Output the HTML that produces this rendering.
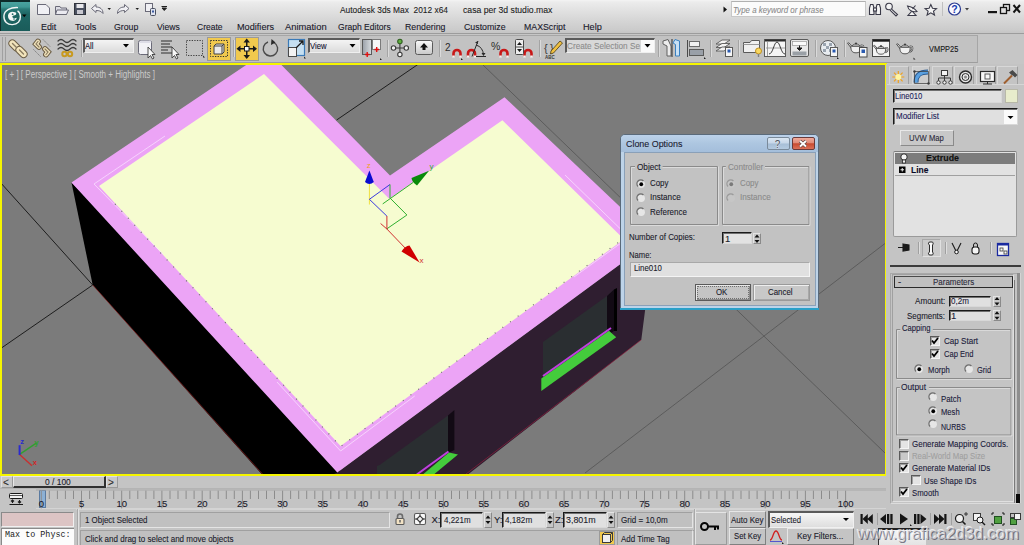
<!DOCTYPE html>
<html><head><meta charset="utf-8">
<style>
*{box-sizing:border-box;margin:0;padding:0}
html,body{width:1024px;height:545px;overflow:hidden;background:#c4c4c4;font-family:"Liberation Sans",sans-serif;color:#1a1a2a;position:relative}
.a{position:absolute}
.t{position:absolute;white-space:nowrap;line-height:1;transform-origin:0 0;font-family:"Liberation Sans",sans-serif;-webkit-text-stroke:0.1px currentColor}
svg{position:absolute;overflow:visible}
</style></head><body>
<!-- title + menu -->
<div class=a style="left:0;top:0;width:1024px;height:34px;background:linear-gradient(#f4f4f4 0,#ececec 2px,#e2e2e2 10px,#d6d6d6 20px,#cbcbcb 30px,#c6c6c6 32px);border-bottom:1.5px solid #9c9c9c"></div>
<!-- toolbar strip -->
<div class=a style="left:0;top:34px;width:1024px;height:30px;background:#c6c6c6"></div>
<div class=a style="left:0;top:35px;width:978px;height:28px;background:#c2c2c2;border-top:1px solid #a6a6a6;border-right:1px solid #a6a6a6;border-bottom:1px solid #9e9e9e"></div>
<!-- viewport -->
<div class=a style="left:0;top:63px;width:887px;height:413px;background:#7b7b7b;border:2px solid #f5f500"></div>
<svg style="left:0;top:0" width="1024" height="545" viewBox="0 0 1024 545">
 <defs><clipPath id="vc"><rect x="2" y="65" width="883" height="409"/></clipPath></defs>
 <g clip-path="url(#vc)">
  <g stroke="#1e1e1e" stroke-width="1" fill="none">
   <line x1="0" y1="182" x2="92.7" y2="285"/>
   <line x1="92.7" y1="285" x2="0" y2="349"/>
   <line x1="336.6" y1="120" x2="420" y2="63"/>
  </g>
  <g stroke="#5c5c5c" stroke-width="1" fill="none">
   <line x1="483" y1="65" x2="885" y2="453"/>
   <line x1="585" y1="473" x2="900" y2="232"/>
  </g>
  <polygon points="71.5,182.5 92.7,285 262.5,475 340,475 340,460" fill="#000"/>
  <line x1="92.7" y1="285" x2="262.5" y2="474" stroke="#a02020" stroke-width="0.6"/>
  <polygon points="330,476 466,476 641.3,339.8 654.2,239.2 337.3,472.4" fill="#2f1e30"/>
  <line x1="466" y1="474" x2="641.3" y2="339.8" stroke="#a02040" stroke-width="0.6"/>
  <!-- window 1 -->
  <polygon points="543,342 607,296 614,289.5 614,331 543,378" fill="#2a2e31"/>
  <polygon points="607,296 614,289.5 614,331 607,336" fill="#120a14"/>
  <polygon points="614,289.5 617,288 617,331 614,331" fill="#000"/>
  <polygon points="541.3,391 541.3,378.6 609,330.7 616.2,337.3" fill="#44cc3c"/>
  <line x1="543" y1="376" x2="611" y2="328" stroke="#c040e0" stroke-width="2"/>
  <!-- window 2 -->
  <polygon points="377,476 377,466 380,464.8 448,415.4 448,451 416,476" fill="#2a2e31"/>
  <polygon points="448,415.4 454.4,410 454.4,450 448,453" fill="#120a14"/>
  <polygon points="421,476 449,452.5 458,454.5 432,476" fill="#44cc3c"/>
  <line x1="416.8" y1="474.5" x2="448.5" y2="451.5" stroke="#c040e0" stroke-width="2"/>
  <!-- roof -->
  <polygon points="71.5,182.5 267.4,50.7 390,175.5 504.5,97.2 654.2,239.2 337.3,472.4" fill="#eca4f6"/>
  <polygon points="99,186 264,74 389.2,198.8 502.4,120.3 624,239.3 340.6,446" fill="#f6fcd0"/>
  <g stroke="#fbe6ff" stroke-width="0.7" fill="none">
   <polyline points="94,184 165,136"/>
   <polyline points="94,184 163,254"/>
   <polyline points="277,382 340.6,451 414.7,396"/>
   <polyline points="565,175 621,229.5"/>
   <polyline points="574,277 621,243"/>
  </g>
  <g stroke="#707070" stroke-width="1.2" stroke-dasharray="1 8.5" fill="none">
   <polyline points="115,204 340.6,446.5 623,239"/>
  </g>
  <!-- gizmo -->
  <g fill="none" stroke-width="1">
   <line x1="369.4" y1="184" x2="369.4" y2="204.5" stroke="#f0e040"/>
   <polyline points="369.4,199.3 390,184.5" stroke="#3a3ae0"/>
   <line x1="390" y1="184.5" x2="390" y2="198.2" stroke="#30b030"/>
   <line x1="369.4" y1="199.3" x2="386.9" y2="216.1" stroke="#3a3ae0"/>
   <polyline points="390,198 406.9,215 386.9,228.8" stroke="#30b030"/>
   <line x1="382.7" y1="203.9" x2="413.2" y2="182.4" stroke="#30b030"/>
   <polyline points="386.9,216 386.9,229 380.6,223.5" stroke="#d03030"/>
   <line x1="386.9" y1="229" x2="405.9" y2="248.8" stroke="#d03030"/>
  </g>
  <path d="M369.4,170.5 L373.8,182 Q369.4,186 365,182 Z" fill="#0a0ad0"/>
  <path d="M429,170.8 L417,185.5 Q412,182 411.5,178 Z" fill="#0a8a0a"/>
  <path d="M419.6,262.5 L401.5,251.5 Q405,246 409.5,245.5 Z" fill="#d00000"/>
  <g font-family="Liberation Sans" font-size="8">
   <text x="366.8" y="168" fill="#f0a020">z</text>
   <text x="429.5" y="168.5" fill="#30b030">y</text>
   <text x="419.5" y="263" fill="#d03030">x</text>
  </g>
  <!-- tripod -->
  <g fill="none" stroke-width="1.4">
   <line x1="19.6" y1="454.4" x2="36.6" y2="442.9" stroke="#30a030"/>
   <line x1="19.6" y1="454.4" x2="32" y2="465.8" stroke="#c83030"/>
   <line x1="19.6" y1="455" x2="19.6" y2="445.2" stroke="#2a2ad0" stroke-width="2"/>
  </g>
  <g font-family="Liberation Sans" font-size="7.5" font-weight="bold">
   <text x="20.2" y="444.3" fill="#2a2ad0">z</text>
   <text x="34.6" y="444.5" fill="#30a030">y</text>
   <text x="32.8" y="464.8" fill="#d02828">x</text>
  </g>
 </g>
</svg>
<div class=a style='left:0px;top:0px;width:30px;height:31px;background:#0d2a2a'></div><div class=a style='left:1px;top:1.5px;width:28.5px;height:29.0px;background:linear-gradient(#4aa3a0 0,#3e9794 5px,#2a7a78 7px,#1e6664 12px,#1a5c5a 100%)'></div><svg style='left:0;top:0' width='30' height='31'>
<path d='M18 7.6 C11 7.2 4.2 9.8 3.9 16 C3.7 21.8 7.5 24.8 12.5 24.6 C17.8 24.4 20.6 21 20.4 16.3 C20.3 13.8 19.2 11.8 17.5 10.8' stroke='#f0f4f4' stroke-width='1.4' fill='none'/>
<path d='M8 15.5 C8.5 12 12 11 15 12.3 C17 13.2 16.5 14.8 14.8 15.3 C13 15.8 11.8 16.2 12.5 17.3 C13.5 18.6 16 18.3 16.8 17.8 C16.5 20.2 14 21.2 11.8 20.8 C9.3 20.3 7.8 18.3 8 15.5 Z' fill='#f4f6f6'/>
<circle cx='12.6' cy='14.2' r='0.9' fill='#1d6866'/><circle cx='14' cy='19' r='0.8' fill='#1d6866'/>
<path d='M22 14.5 H26.5 L24.25 17.2 Z' fill='#050505'/>
</svg><svg style='left:0;top:0' width='200' height='18'>
<g stroke='#6a6a78' stroke-width='1' fill='#f0f0f4'>
 <path d='M37.5 4.5 H46 L49.5 8 V14.5 H37.5 Z'/>
 <path d='M55.5 6.5 H60 L61 8 H66.5 V14.5 H55.5 Z' fill='#dcdce4'/>
 <path d='M57 10 H68.5 L66.5 14.5 H55.5 Z' fill='#eaeaf0'/>
</g>
<rect x='74.5' y='3.5' width='11' height='11' fill='#4a5060' stroke='#30343c'/>
<rect x='76.5' y='4' width='7' height='4' fill='#e8e8ec'/>
<rect x='77' y='10' width='6' height='4' fill='#c8c8d0'/>
<path d='M91.5 8.5 L96 4.5 V7 C100 7 103 9 103 13.5 C101 11 99 10.5 96 10.5 V12.5 Z' fill='#f0f0f4' stroke='#6a6a78'/>
<path d='M107.5 8 H111 L109.25 10 Z' fill='#202020'/>
<path d='M129 8.5 L124.5 4.5 V7 C120.5 7 117.5 9 117.5 13.5 C119.5 11 121.5 10.5 124.5 10.5 V12.5 Z' fill='#f0f0f4' stroke='#6a6a78'/>
<path d='M135.5 8 H139 L137.25 10 Z' fill='#202020'/>
<rect x='145.5' y='3.5' width='7' height='8' fill='#f0f0f4' stroke='#6a6a78'/>
<rect x='150.5' y='8.5' width='5' height='7' rx='1' fill='#e0e4f0' stroke='#4a5060'/>
<rect x='152' y='10.5' width='2' height='2' fill='#3a5aa0'/>
<path d='M161.5 6.5 H167 M162 8 H166.5 L164.25 10.5 Z' stroke='#202020' fill='#202020'/>
</svg><svg style='left:700px;top:0' width='324' height='18'>
<path d='M23.5 6.5 L27 9.5 L23.5 12.5 Z' fill='#101010'/>
</svg><div class=a style='left:731px;top:1px;width:135px;height:16px;background:#fbfbfb;border:1px solid #c8c8c8;border-top-color:#b0b0b0'></div><svg style='left:860px;top:0' width='164' height='18'>
<g fill='#f4f4f4' stroke='#3a3a48' stroke-width='1.1'>
 <path d='M9.5 14.5 V8 L10.5 4.5 H13 L14 8 V14.5 Z'/><path d='M16 14.5 V8 L17 4.5 H19.5 L20.5 8 V14.5 Z'/>
 <rect x='13.5' y='8' width='3' height='3'/>
</g>
<g fill='none' stroke='#3a3a48' stroke-width='1.1'>
 <circle cx='29' cy='6.5' r='3.3' fill='#f4f4f4'/><path d='M31.3 8.8 L37.5 14.5 L36 16 L30 10.2' fill='#f4f4f4'/>
 <path d='M48 15.5 H56 L52 11 Z' fill='#f4f4f4'/><path d='M47.5 6 C48.5 10.5 52.5 12.5 57 11.5 C55 9 51 6.5 47.5 6 Z' fill='#f4f4f4'/><path d='M52.5 9 L55.5 5.5'/>
 <path d='M70.8 4.5 L72.5 8.3 L76.5 8.6 L73.5 11.2 L74.5 15 L70.8 12.8 L67.1 15 L68.1 11.2 L65.1 8.6 L69.1 8.3 Z' fill='#f4f4f4'/>
</g>
<rect x='82' y='2' width='1' height='14' fill='#c0c0c0'/>
<circle cx='94.5' cy='9' r='6' fill='#fafaff' stroke='#2a3a90' stroke-width='1.2'/>
<text x='91.3' y='13' font-family='Liberation Sans' font-weight='bold' font-size='10.5' fill='#1a3ab0'>?</text>
<path d='M105 8 H109 L107 10.5 Z' fill='#404040'/>
<rect x='128' y='11' width='9' height='2.2' fill='#151515'/>
<rect x='143.5' y='4.5' width='6' height='6' fill='none' stroke='#151515' stroke-width='1.3'/>
<rect x='140.5' y='7.5' width='6' height='6' fill='#e0e0e0' stroke='#151515' stroke-width='1.3'/>
<path d='M153.5 5 L160 12.5 M160 5 L153.5 12.5' stroke='#151515' stroke-width='2'/>
</svg><div class=a style='left:2px;top:37px;width:1px;height:24px;background:#a0a0a0'></div><div class=a style='left:4.5px;top:37px;width:1.0px;height:24px;background:#a0a0a0'></div><div class=a style='left:80.5px;top:40px;width:1.0px;height:17px;background:#a4a4a4'></div><div class=a style='left:81.5px;top:40px;width:1.0px;height:17px;background:#dadada'></div><div class=a style='left:233px;top:40px;width:1px;height:17px;background:#a4a4a4'></div><div class=a style='left:234px;top:40px;width:1px;height:17px;background:#dadada'></div><div class=a style='left:386.5px;top:40px;width:1.0px;height:17px;background:#a4a4a4'></div><div class=a style='left:387.5px;top:40px;width:1.0px;height:17px;background:#dadada'></div><div class=a style='left:438.5px;top:40px;width:1.0px;height:17px;background:#a4a4a4'></div><div class=a style='left:439.5px;top:40px;width:1.0px;height:17px;background:#dadada'></div><div class=a style='left:539px;top:40px;width:1px;height:17px;background:#a4a4a4'></div><div class=a style='left:540px;top:40px;width:1px;height:17px;background:#dadada'></div><div class=a style='left:657.5px;top:40px;width:1.0px;height:17px;background:#a4a4a4'></div><div class=a style='left:658.5px;top:40px;width:1.0px;height:17px;background:#dadada'></div><div class=a style='left:709.5px;top:40px;width:1.0px;height:17px;background:#a4a4a4'></div><div class=a style='left:710.5px;top:40px;width:1.0px;height:17px;background:#dadada'></div><div class=a style='left:738px;top:40px;width:1px;height:17px;background:#a4a4a4'></div><div class=a style='left:739px;top:40px;width:1px;height:17px;background:#dadada'></div><div class=a style='left:815px;top:40px;width:1px;height:17px;background:#a4a4a4'></div><div class=a style='left:816px;top:40px;width:1px;height:17px;background:#dadada'></div><div class=a style='left:843.5px;top:40px;width:1.0px;height:17px;background:#a4a4a4'></div><div class=a style='left:844.5px;top:40px;width:1.0px;height:17px;background:#dadada'></div><div class=a style='left:82.5px;top:37.5px;width:51.5px;height:15.5px;background:linear-gradient(#f4f4f4,#dcdcdc);border-top:2px solid #5a5a5a;border-left:2px solid #5a5a5a;border-bottom:1px solid #efefef;border-right:1px solid #efefef'></div><div class=a style='left:307.5px;top:37.5px;width:52.5px;height:15.5px;background:linear-gradient(#f4f4f4,#dcdcdc);border-top:2px solid #5a5a5a;border-left:2px solid #5a5a5a;border-bottom:1px solid #efefef;border-right:1px solid #efefef'></div><div class=a style='left:565px;top:37.5px;width:90px;height:15.5px;background:#d8d8d8;border-top:2px solid #5a5a5a;border-left:2px solid #5a5a5a;border-bottom:1px solid #efefef;border-right:1px solid #efefef'></div><div class=a style='left:641px;top:39.5px;width:13px;height:12.5px;background:#fafafa'></div><div class=a style='left:207px;top:37px;width:23.5px;height:23.5px;background:#f1c94e;border:1px solid #9a9a9a'></div><div class=a style='left:235px;top:37px;width:23.5px;height:23.5px;background:#f1c94e;border:1px solid #9a9a9a'></div><svg style='left:0;top:0' width='1000' height='64'>
<g fill='none' stroke-linecap='round'>
 <!-- link -->
 <g stroke='#6a5c44' stroke-width='1' fill='#f2e4bc'>
  <rect x='8' y='42' width='13' height='7' rx='3.5' transform='rotate(45 14.5 45.5)'/>
  <rect x='15' y='48.5' width='13' height='7' rx='3.5' transform='rotate(45 21.5 52)'/>
 </g>
 <g stroke='#8a7c60' stroke-width='1.4' fill='none'><path d='M12.5 43.5 L16.5 47.5 M19.5 50 L23.5 54'/></g>
 <!-- unlink -->
 <g stroke='#6a5c44' stroke-width='5.8'><path d='M39 47 L36 44 L38 41.5'/><path d='M45 49 L48 52 L46 54.5'/></g>
 <g stroke='#f2e4bc' stroke-width='3.8'><path d='M39 47 L36 44 L38 41.5'/><path d='M45 49 L48 52 L46 54.5'/></g>
 <g stroke='#8a7c60' stroke-width='1.2'><path d='M39 47 L36 44 L38 41.5'/><path d='M45 49 L48 52 L46 54.5'/></g>
 <g stroke='#8a8a8a' stroke-width='1' stroke-dasharray='1 1.2'><path d='M43 39.5 L50.5 47 M33.5 49.5 L41 57'/></g>
 <!-- bind -->
 <g stroke='#3a3a3a' stroke-width='1.2'><path d='M58 41 Q61 38 64 41 T70 41 T76 41 M58 45 Q61 42 64 45 T70 45 T76 45 M58 49 Q61 46 64 49 T70 49 T76 49'/></g>
 <g stroke='#c89a20' stroke-width='2'><circle cx='64.5' cy='54' r='2.2'/><circle cx='70' cy='54' r='2.2'/></g>
</g>
<path d='M123 44 H129 L126 47.5 Z' fill='#000'/>
<path d='M349.5 44 H355.5 L352.5 47.5 Z' fill='#000'/>
<path d='M644.5 44 H650.5 L647.5 47.5 Z' fill='#000'/>
<!-- select object -->
<rect x='138.5' y='40.5' width='13' height='14' rx='2' fill='#f2f2f6' stroke='#6a6a78'/>
<path d='M139 43 L141 40.5 H151.5 L150 43 Z' fill='#dcdce6'/>
<path d='M148 47 V58 L150.5 55.5 L152.5 59 L154 58 L152 54.5 L155 54.5 Z' fill='#f8f8f8' stroke='#3a3a3a' stroke-width='0.9'/>
<!-- select by name -->
<g stroke='#606060' stroke-width='1.3'><path d='M161 41 H172 M161 44 H170 M161 47 H172 M161 50 H168 M161 53 H172'/></g>
<path d='M172 47 V58 L174.5 55.5 L176.5 59 L178 58 L176 54.5 L179 54.5 Z' fill='#f8f8f8' stroke='#3a3a3a' stroke-width='0.9'/>
<!-- rect selection -->
<rect x='186.5' y='40.5' width='16' height='15' fill='none' stroke='#404040' stroke-dasharray='1.3 1.3'/>
<path d='M203 55.5 L205 57.5 L203 57.5 Z' fill='#202020'/>
<!-- window crossing -->
<rect x='210.5' y='40.5' width='17' height='16' fill='none' stroke='#303030' stroke-dasharray='1.3 1.3'/>
<path d='M214 46 L216 44 H224 V52 L222 54 H214 Z' fill='#eaeaea' stroke='#404040'/>
<path d='M214 46 H222 V54 M222 46 L224 44' stroke='#404040' fill='none'/>
<!-- move -->
<g fill='#1a1a1a'>
 <path d='M246.7 38.5 L243.5 42.5 H250 Z M246.7 59 L243.5 55 H250 Z M236.5 48.7 L240.5 45.5 V52 Z M257 48.7 L253 45.5 V52 Z'/>
 <rect x='246' y='42' width='1.5' height='13.5'/><rect x='240' y='48' width='13.5' height='1.5'/>
</g>
<rect x='244.5' y='46.5' width='4.5' height='4.5' fill='#fafafa' stroke='#1a1a1a'/>
<!-- rotate -->
<path d='M274 42.5 A7.2 7.2 0 1 1 268 42' fill='none' stroke='#4a4a4a' stroke-width='1.4'/>
<path d='M271.5 39 L275.5 42.5 L271 45 Z' fill='#2a2a2a'/>
<!-- scale -->
<rect x='288.5' y='39.5' width='16' height='16' fill='#c6e0f2' stroke='#3a7ab8' stroke-width='1.2'/>
<rect x='288.5' y='47.5' width='8' height='9' fill='#f2f2f2' stroke='#4a4a4a'/>
<path d='M296 48 L303 41 M299 41 H303 V45' stroke='#1a1a1a' stroke-width='1.3' fill='none'/>
<path d='M304 56.5 L306 58.5 L304 58.5 Z' fill='#202020'/>
<!-- pivot -->
<rect x='362.5' y='39.5' width='9' height='15' fill='url(#gpiv)' stroke='#5a5a5a'/>
<defs><linearGradient id='gpiv' x1='0' x2='1'><stop offset='0' stop-color='#9aa0a8'/><stop offset='1' stop-color='#d8dce0'/></linearGradient></defs>
<rect x='372.5' y='39.5' width='8' height='10' fill='#f6f6f6' stroke='#7a7a7a'/>
<path d='M365 54.5 H369.5 M367.2 52 V57 M374.5 49.5 H379 M376.7 47 V52' stroke='#e01010' stroke-width='1.4'/>
<path d='M380 58 L382 60 L380 60 Z' fill='#202020'/>
<!-- manipulate -->
<g stroke='#3a3a3a' stroke-width='1.1' fill='#f4f4f4'>
 <path d='M399.9 44 V52 M395 48 H405' fill='none'/>
 <circle cx='393.5' cy='48' r='2.2'/><circle cx='406.3' cy='48' r='2.2'/><circle cx='399.9' cy='54.5' r='2.2'/>
 <circle cx='399.9' cy='41.5' r='2.2' fill='#60b040' stroke='#306020'/>
</g>
<!-- keyboard -->
<rect x='415.5' y='40.5' width='17' height='14' rx='2' fill='url(#gkey)' stroke='#5a5a5a'/>
<defs><linearGradient id='gkey' x1='0' y1='0' x2='0' y2='1'><stop offset='0' stop-color='#fafafa'/><stop offset='1' stop-color='#c8c8c8'/></linearGradient></defs>
<path d='M424 43 L420 47.5 H422.5 V50 H425.5 V47.5 H428 Z' fill='#101010'/>
<!-- snaps -->
<text x='445' y='50.5' font-family='Liberation Sans' font-size='10' fill='#2a2a2a'>2</text>
<g fill='none' stroke-width='2.6'>
 <path d='M453.5 57 V53.5 A3.5 3.5 0 0 1 460.5 53.5 V57' stroke='#c81818'/>
 <path d='M468 57 V53.5 A3.5 3.5 0 0 1 475 53.5 V57' stroke='#c81818'/>
 <path d='M500.5 57 V53.5 A3.5 3.5 0 0 1 507.5 53.5 V57' stroke='#c81818'/>
 <path d='M524.5 57 V53.5 A3.5 3.5 0 0 1 531.5 53.5 V57' stroke='#c81818'/>
</g>
<g fill='#f4f4f4'><rect x='452.2' y='55.5' width='2.6' height='2'/><rect x='459.2' y='55.5' width='2.6' height='2'/><rect x='466.7' y='55.5' width='2.6' height='2'/><rect x='473.7' y='55.5' width='2.6' height='2'/><rect x='499.2' y='55.5' width='2.6' height='2'/><rect x='506.2' y='55.5' width='2.6' height='2'/><rect x='523.2' y='55.5' width='2.6' height='2'/><rect x='530.2' y='55.5' width='2.6' height='2'/></g>
<path d='M461 58 L463 60 L461 60 Z' fill='#202020'/>
<path d='M472 56.5 L478 41 M476 56.5 H486 M476 45 Q483 47 483.5 55' stroke='#2a2a2a' stroke-width='1' fill='none'/>
<path d='M481.5 53 L483.5 56 L485.5 53 Z M475 42.5 L478 41 L478 44 Z' fill='#2a2a2a'/>
<text x='491' y='50' font-family='Liberation Sans' font-size='10.5' fill='#2a2a2a'>%</text>
<rect x='515.5' y='39.5' width='8' height='15' rx='1' fill='#eeeeee' stroke='#4a4a4a'/>
<path d='M517 45 L519.5 42 L522 45 Z M517 49 L519.5 52 L522 49 Z' fill='#1a1a1a'/>
<path d='M516 47 H523' stroke='#4a4a4a'/>
<!-- edit named selection -->
<text x='544' y='52' font-family='Liberation Sans' font-size='11' fill='#3a3a3a'>{</text>
<text x='550' y='52' font-family='Liberation Sans' font-size='11' fill='#3a3a3a'>}</text>
<text x='545' y='58.5' font-family='Liberation Sans' font-size='4.5' font-weight='bold' fill='#3a3a3a'>ABC</text>
<path d='M551 51 L560 41 L562.5 43 L553.5 53 L550.5 54 Z' fill='#f0c040' stroke='#5a4a20' stroke-width='0.9'/>
<!-- mirror -->
<path d='M663 41 L668 39.5 L671 46 V56 H667 V46 L663 44 Z' fill='#ececec' stroke='#606060'/>
<rect x='671.5' y='39' width='1' height='18' fill='#2a2a2a'/>
<path d='M679.5 41 L675 39.5 L673 43 L675.5 44.5 V56 H679.5 Z' fill='#c8e0f4' stroke='#3a80c0'/>
<!-- align -->
<rect x='687' y='40' width='1' height='17' fill='#4a4a4a'/>
<rect x='689.5' y='41.5' width='10' height='5' fill='#f0f0f0' stroke='#6a6a6a'/>
<rect x='689.5' y='49.5' width='14' height='6' fill='#9aa0a8' stroke='#5a5a5a'/>
<path d='M704 57 L706 59 L704 59 Z' fill='#202020'/>
<!-- layers -->
<g stroke='#5a5a5a' fill='#f4f4f4' stroke-width='0.9'>
 <path d='M716 44 L722 40 H730 L724 44 Z'/><path d='M716 47.5 L722 43.5 H730 L724 47.5 Z'/><path d='M716 51 L722 47 H730 L724 51 Z'/>
</g>
<rect x='725.5' y='47.5' width='7' height='9' fill='#f6f6f6' stroke='#5a5a5a'/>
<rect x='727.5' y='49.5' width='3' height='3' fill='#2a5ab0'/>
<!-- scene explorer -->
<path d='M743.5 42.5 H750 L751.5 40.5 H759.5 V52.5 H743.5 Z' fill='#f0f0f0' stroke='#5a5a5a'/>
<path d='M743.5 44.5 H759.5' stroke='#9a9a9a'/>
<circle cx='758.5' cy='51' r='3' fill='#f8d860' stroke='#c09020'/>
<rect x='757.8' y='54' width='1.4' height='3' fill='#808080'/>
<!-- curve editor -->
<rect x='764.5' y='39.5' width='21' height='17' fill='#f4f4f4' stroke='#5a5a5a'/>
<rect x='765' y='39.5' width='20.5' height='2' fill='#2a2a2a'/>
<path d='M767.5 42 V56 M766 48 H785' stroke='#8a8a8a' stroke-width='0.8'/>
<path d='M769 54 C773 54 774 42 777 42 C780 42 781 54 785 54' stroke='#3a3a3a' fill='none'/>
<!-- schematic -->
<rect x='790.5' y='39.5' width='18' height='17' rx='1.5' fill='#e8e8e8' stroke='#5a5a5a'/>
<rect x='792.5' y='41.5' width='14' height='4' fill='#fafafa' stroke='#8a8a8a' stroke-width='0.6'/>
<rect x='792.5' y='51.5' width='14' height='4' fill='#9aa0a6'/>
<path d='M799.5 45.5 V49 M797 48 H802 L799.5 50.5 Z' stroke='#1a1a1a' fill='#1a1a1a'/>
<!-- material editor -->
<circle cx='828' cy='48' r='7.5' fill='#e8ecf0' stroke='#5a5a5a'/>
<g fill='#9aa4b0'><rect x='823' y='43' width='3' height='3'/><rect x='829' y='43' width='3' height='3'/><rect x='826' y='46' width='3' height='3'/><rect x='823' y='49' width='3' height='3'/><rect x='829' y='49' width='3' height='3'/></g>
<rect x='830.5' y='47.5' width='7' height='9' fill='#f6f6f6' stroke='#5a5a5a'/>
<rect x='832.5' y='49.5' width='3' height='3' fill='#2a5ab0'/>
<path d='M837 57 L839 59 L837 59 Z' fill='#202020'/>
<!-- render setup -->
<path d='M851.2 48.0 L847.5 43.2 L848.9 42.8 L851.7 46.1 Z' fill='#e8e8e8' stroke='#4a4a4a' stroke-width='0.9'/><path d='M860.8 45.6 C864.5 44.2 864.5 49.9 860.3 50.9' fill='none' stroke='#4a4a4a' stroke-width='1.6'/><path d='M860.8 45.6 C864.5 44.2 864.5 49.9 860.3 50.9' fill='none' stroke='#e8e8e8' stroke-width='0.6'/><path d='M850.8 46.1 C850.8 51.8 853.1 52.8 856.0 52.8 C858.9 52.8 861.2 51.8 861.2 46.1 Z' fill='#f0f0f0' stroke='#4a4a4a' stroke-width='0.9'/><path d='M852.2 46.1 C853.1 43.2 858.9 43.2 859.8 46.1 Z' fill='#dcdcdc' stroke='#4a4a4a' stroke-width='0.9'/><circle cx='856' cy='43.4' r='1.0' fill='#3a3a3a'/><rect x='859.5' y='47.5' width='7.5' height='9.5' fill='#f6f6f6' stroke='#4a4a4a'/>
<rect x='861.5' y='49.5' width='3.5' height='3.5' fill='#2a5ab0'/>
<!-- rendered frame window -->
<rect x='872.5' y='39.5' width='17' height='17' fill='#f4f4f4' stroke='#4a4a4a'/>
<rect x='873' y='39.5' width='16.5' height='2.2' fill='#1a1a1a'/>
<path d='M876.8 50.0 L873.4 45.8 L874.6 45.3 L877.2 48.3 Z' fill='#e8e8e8' stroke='#4a4a4a' stroke-width='0.9'/><path d='M885.2 47.9 C888.6 46.6 888.6 51.7 884.8 52.5' fill='none' stroke='#4a4a4a' stroke-width='1.6'/><path d='M885.2 47.9 C888.6 46.6 888.6 51.7 884.8 52.5' fill='none' stroke='#e8e8e8' stroke-width='0.6'/><path d='M876.3 48.3 C876.3 53.4 878.5 54.2 881.0 54.2 C883.5 54.2 885.7 53.4 885.7 48.3 Z' fill='#f0f0f0' stroke='#4a4a4a' stroke-width='0.9'/><path d='M877.6 48.3 C878.5 45.8 883.5 45.8 884.4 48.3 Z' fill='#dcdcdc' stroke='#4a4a4a' stroke-width='0.9'/><circle cx='881' cy='45.9' r='0.9' fill='#3a3a3a'/>
<!-- render -->
<path d='M900.2 49.0 L896.5 44.2 L897.9 43.8 L900.7 47.1 Z' fill='#e8e8e8' stroke='#4a4a4a' stroke-width='0.9'/><path d='M909.8 46.6 C913.5 45.2 913.5 50.9 909.3 51.9' fill='none' stroke='#4a4a4a' stroke-width='1.6'/><path d='M909.8 46.6 C913.5 45.2 913.5 50.9 909.3 51.9' fill='none' stroke='#e8e8e8' stroke-width='0.6'/><path d='M899.8 47.1 C899.8 52.8 902.1 53.8 905.0 53.8 C907.9 53.8 910.2 52.8 910.2 47.1 Z' fill='#f0f0f0' stroke='#4a4a4a' stroke-width='0.9'/><path d='M901.2 47.1 C902.1 44.2 907.9 44.2 908.8 47.1 Z' fill='#dcdcdc' stroke='#4a4a4a' stroke-width='0.9'/><circle cx='905' cy='44.4' r='1.0' fill='#3a3a3a'/><path d='M913.5 57.5 L915.5 59.5 L913.5 59.5 Z' fill='#202020'/>
</svg><div class=a style='left:0px;top:476px;width:887px;height:69px;background:#c4c4c4'></div><div class=a style='left:0px;top:475.5px;width:887px;height:12.5px;background:#c4c4c4'></div><div class=a style='left:1px;top:476px;width:11.5px;height:11.5px;background:#c8c8c8;border:1px solid #e0e0e0;border-right-color:#9a9a9a;border-bottom-color:#9a9a9a'></div><div class=a style='left:13px;top:476px;width:93px;height:12px;background:#c6c6c6;border-top:1px solid #e8e8e8;border-left:1px solid #e8e8e8;border-right:2px solid #303030;border-bottom:2px solid #303030'></div><div class=a style='left:106px;top:476px;width:12px;height:11.5px;background:#c8c8c8;border:1px solid #e0e0e0;border-right-color:#9a9a9a;border-bottom-color:#9a9a9a'></div><div class=a style='left:0px;top:488px;width:887px;height:21px;background:#c4c4c4;border-top:1px solid #b4b4b4'></div><div class=a style='left:38.5px;top:490px;width:7.0px;height:18px;background:#8cb0d4;border:1px solid #5a7aa0'></div><svg style='left:0;top:0' width='887' height='510'><path d='M41.3 490.5 V509M49.3 490.5 V499M57.4 490.5 V499M65.4 490.5 V499M73.5 490.5 V499M81.5 490.5 V509M89.6 490.5 V499M97.6 490.5 V499M105.6 490.5 V499M113.7 490.5 V499M121.7 490.5 V509M129.8 490.5 V499M137.8 490.5 V499M145.9 490.5 V499M153.9 490.5 V499M161.9 490.5 V509M170.0 490.5 V499M178.0 490.5 V499M186.1 490.5 V499M194.1 490.5 V499M202.2 490.5 V509M210.2 490.5 V499M218.2 490.5 V499M226.3 490.5 V499M234.3 490.5 V499M242.4 490.5 V509M250.4 490.5 V499M258.5 490.5 V499M266.5 490.5 V499M274.5 490.5 V499M282.6 490.5 V509M290.6 490.5 V499M298.7 490.5 V499M306.7 490.5 V499M314.8 490.5 V499M322.8 490.5 V509M330.8 490.5 V499M338.9 490.5 V499M346.9 490.5 V499M355.0 490.5 V499M363.0 490.5 V509M371.1 490.5 V499M379.1 490.5 V499M387.1 490.5 V499M395.2 490.5 V499M403.2 490.5 V509M411.3 490.5 V499M419.3 490.5 V499M427.4 490.5 V499M435.4 490.5 V499M443.4 490.5 V509M451.5 490.5 V499M459.5 490.5 V499M467.6 490.5 V499M475.6 490.5 V499M483.7 490.5 V509M491.7 490.5 V499M499.8 490.5 V499M507.8 490.5 V499M515.8 490.5 V499M523.9 490.5 V509M531.9 490.5 V499M540.0 490.5 V499M548.0 490.5 V499M556.1 490.5 V499M564.1 490.5 V509M572.1 490.5 V499M580.2 490.5 V499M588.2 490.5 V499M596.3 490.5 V499M604.3 490.5 V509M612.4 490.5 V499M620.4 490.5 V499M628.4 490.5 V499M636.5 490.5 V499M644.5 490.5 V509M652.6 490.5 V499M660.6 490.5 V499M668.7 490.5 V499M676.7 490.5 V499M684.7 490.5 V509M692.8 490.5 V499M700.8 490.5 V499M708.9 490.5 V499M716.9 490.5 V499M725.0 490.5 V509M733.0 490.5 V499M741.0 490.5 V499M749.1 490.5 V499M757.1 490.5 V499M765.2 490.5 V509M773.2 490.5 V499M781.3 490.5 V499M789.3 490.5 V499M797.3 490.5 V499M805.4 490.5 V509M813.4 490.5 V499M821.5 490.5 V499M829.5 490.5 V499M837.6 490.5 V499M845.6 490.5 V509' stroke='#8c8c8c' stroke-width='1'/><path d='M36 509 H887' stroke='#e4e4e4'/><path d='M36 490 H887' stroke='#a8a8a8'/></svg><svg style='left:0;top:488px' width='30' height='20'>
<rect x='9.5' y='5.5' width='13' height='5' rx='1' fill='#f4f4f4' stroke='#1a1a1a'/>
<path d='M10 7.5 H22' stroke='#1a1a1a' stroke-width='0.7'/>
<path d='M12.5 12 V15 M11 13.5 L12.5 12 L14 13.5 M19.5 12 V15 M18 13.5 L19.5 15 L21 13.5 M9.5 16.5 H23' stroke='#1a1a1a' stroke-width='1.1' fill='none'/>
</svg><div class=a style='left:0px;top:509px;width:76px;height:36px;background:#c4c4c4'></div><div class=a style='left:1px;top:511.5px;width:73px;height:15.5px;background:#dcc4c4;border-top:1px solid #8a8a8a;border-left:1px solid #8a8a8a;border-right:1px solid #f0f0f0;border-bottom:1px solid #f0f0f0'></div><div class=a style='left:1px;top:528px;width:73px;height:17px;background:#fcfcfc;border-top:1px solid #8a8a8a;border-left:1px solid #8a8a8a'></div><div class=a style='left:76.5px;top:509px;width:1.0px;height:36px;background:#a8a8a8'></div><div class=a style='left:77.5px;top:509px;width:1.0px;height:36px;background:#e0e0e0'></div><div class=a style='left:79.5px;top:511.5px;width:310.5px;height:16.0px;background:#c0c0c0;border:1px solid #a0a0a0;border-right-color:#e4e4e4;border-bottom-color:#e4e4e4'></div><div class=a style='left:79.5px;top:530px;width:620.5px;height:15px;background:#c0c0c0;border:1px solid #a0a0a0;border-right-color:#e4e4e4;border-bottom:none'></div><svg style='left:390px;top:509px' width='40' height='20'>
<rect x='6' y='9.5' width='8' height='6' rx='1' fill='#f2e2c4' stroke='#5a5a5a' stroke-width='1.1'/>
<path d='M7.5 9.5 V7.5 A2.5 2.5 0 0 1 12.5 7.5 V9.5' stroke='#6a6a6a' fill='none' stroke-width='1.6'/>
<rect x='9.2' y='11' width='1.6' height='2.5' fill='#6a6a6a'/>
<rect x='24.5' y='4.5' width='11' height='11' rx='1.5' fill='#f8f8f8' stroke='#5a5a5a' stroke-width='1.1'/>
<path d='M30 4.5 V15.5 M24.5 10 H35.5' stroke='#6a6a6a' stroke-width='1.3'/>
<path d='M30 6.8 L33.2 10 L30 13.2 L26.8 10 Z' fill='#f0f0f0' stroke='#3a3a3a' stroke-width='1.1'/>
</svg><div class=a style='left:440px;top:512px;width:43px;height:15.5px;background:#e0e0e0;border-top:1px solid #1a1a1a;border-left:1px solid #1a1a1a;border-right:1px solid #d8d8d8;border-bottom:1px solid #d8d8d8;box-shadow:inset 1px 1px 0 #707070'></div><div class=a style='left:483.5px;top:512px;width:8.0px;height:15.5px;background:#c6c6c6;border-top:1px solid #e4e4e4;border-left:1px solid #e4e4e4;border-right:1px solid #8a8a8a;border-bottom:1px solid #8a8a8a'></div><svg style='left:483.5px;top:512px' width='8' height='15.5'><path d='M1.5 6.55 L4 3.55 L6.5 6.55 Z M1.5 8.95 L4 11.95 L6.5 8.95 Z' fill='#101010'/></svg><div class=a style='left:502px;top:512px;width:43.5px;height:15.5px;background:#e0e0e0;border-top:1px solid #1a1a1a;border-left:1px solid #1a1a1a;border-right:1px solid #d8d8d8;border-bottom:1px solid #d8d8d8;box-shadow:inset 1px 1px 0 #707070'></div><div class=a style='left:546px;top:512px;width:8px;height:15.5px;background:#c6c6c6;border-top:1px solid #e4e4e4;border-left:1px solid #e4e4e4;border-right:1px solid #8a8a8a;border-bottom:1px solid #8a8a8a'></div><svg style='left:546px;top:512px' width='8' height='15.5'><path d='M1.5 6.55 L4 3.55 L6.5 6.55 Z M1.5 8.95 L4 11.95 L6.5 8.95 Z' fill='#101010'/></svg><div class=a style='left:563px;top:512px;width:43.5px;height:15.5px;background:#e0e0e0;border-top:1px solid #1a1a1a;border-left:1px solid #1a1a1a;border-right:1px solid #d8d8d8;border-bottom:1px solid #d8d8d8;box-shadow:inset 1px 1px 0 #707070'></div><div class=a style='left:607px;top:512px;width:8px;height:15.5px;background:#c6c6c6;border-top:1px solid #e4e4e4;border-left:1px solid #e4e4e4;border-right:1px solid #8a8a8a;border-bottom:1px solid #8a8a8a'></div><svg style='left:607px;top:512px' width='8' height='15.5'><path d='M1.5 6.55 L4 3.55 L6.5 6.55 Z M1.5 8.95 L4 11.95 L6.5 8.95 Z' fill='#101010'/></svg><div class=a style='left:617px;top:511.5px;width:76px;height:16.0px;background:#c0c0c0;border:1px solid #a0a0a0;border-right-color:#e4e4e4;border-bottom-color:#e4e4e4'></div><div class=a style='left:617px;top:529.5px;width:76px;height:15.5px;background:#c0c0c0;border:1px solid #a0a0a0;border-right-color:#e4e4e4;border-bottom:none'></div><div class=a style='left:598.5px;top:530.5px;width:16.0px;height:14.5px;background:#f1c94e;border:1px solid #9a9a9a'></div><svg style='left:598px;top:530px' width='17' height='15'><rect x='4.5' y='4.5' width='8' height='8' fill='#f0f0f0' stroke='#3a3a3a'/><path d='M4.5 4.5 L6.5 2.5 H14.5 V10.5 L12.5 12.5 M12.5 4.5 L14.5 2.5' stroke='#3a3a3a' fill='none'/></svg><div class=a style='left:694px;top:509px;width:1px;height:36px;background:#a8a8a8'></div><div class=a style='left:695px;top:509px;width:1px;height:36px;background:#e0e0e0'></div><div class=a style='left:695px;top:511.5px;width:32px;height:33.5px;background:#c4c4c4;border:1px solid #e4e4e4;border-right-color:#9a9a9a;border-bottom-color:#9a9a9a'></div><svg style='left:695px;top:511px' width='32' height='34'><circle cx='9.5' cy='15.5' r='3.5' fill='none' stroke='#050505' stroke-width='2'/><path d='M13 15.5 H24 M20 15.5 V19 M23 15.5 V18.5' stroke='#050505' stroke-width='2'/></svg><div class=a style='left:728.5px;top:511px;width:37.5px;height:16.5px;background:#c4c4c4;border-top:1px solid #e6e6e6;border-left:1px solid #e6e6e6;border-right:1px solid #808080;border-bottom:1px solid #808080'></div><div class=a style='left:728.5px;top:528px;width:37.5px;height:17px;background:#c4c4c4;border-top:1px solid #e6e6e6;border-left:1px solid #e6e6e6;border-right:1px solid #808080;border-bottom:1px solid #808080'></div><div class=a style='left:767.5px;top:511px;width:86.5px;height:16.5px;background:linear-gradient(#f6f6f6,#dedede);border-top:2px solid #5a5a5a;border-left:2px solid #5a5a5a;border-right:1px solid #f0f0f0;border-bottom:1px solid #f0f0f0'></div><svg style='left:840px;top:511px' width='14' height='16'><path d='M3 7 H9 L6 10 Z' fill='#000'/></svg><svg style='left:767px;top:528px' width='20' height='17'><path d='M3 12 C6 12 6 3 9 3 C12 3 12 12 15 12' stroke='#d02020' stroke-width='1.3' fill='none'/><path d='M3 13.5 H15' stroke='#3a3ad0' stroke-width='0.8'/><path d='M15 14 L17 16 L15 16 Z' fill='#202020'/></svg><div class=a style='left:786.5px;top:528px;width:67.5px;height:17px;background:#c4c4c4;border-top:1px solid #e6e6e6;border-left:1px solid #e6e6e6;border-right:1px solid #808080;border-bottom:1px solid #808080'></div><div class=a style='left:855px;top:509px;width:169px;height:36px;background:#c4c4c4'></div><div class=a style='left:887px;top:507.5px;width:137px;height:1.0px;background:#8a8a8a'></div><svg style='left:855px;top:509px' width='169' height='36'>
<g fill='#151515'>
 <rect x='5.5' y='5' width='2.2' height='10'/><path d='M7.5 10 L12.8 5 V15 Z M12.3 10 L17.8 5 V15 Z'/>
 <path d='M25 10 L31 5 V15 Z'/><rect x='32' y='5' width='2.3' height='10'/><rect x='35.3' y='5' width='2.3' height='10'/>
 <path d='M45 4.5 L53 10 L45 15.5 Z'/>
 <rect x='59' y='5' width='2.3' height='10'/><rect x='62.3' y='5' width='2.3' height='10'/><path d='M65.5 5 L71.5 10 L65.5 15 Z'/>
 <path d='M79 5 L84.5 10 L79 15 Z M84 5 L89.5 10 L84 15 Z'/><rect x='89.3' y='5' width='2.2' height='10'/>
</g>
<path d='M55 15 L57 17 L55 17 Z' fill='#202020'/>
<rect x='22' y='4' width='1' height='12' fill='#a0a0a0'/><rect x='75' y='4' width='1' height='12' fill='#a0a0a0'/><rect x='96' y='4' width='1' height='12' fill='#a0a0a0'/>
<circle cx='104.5' cy='9.5' r='4' fill='#f0f0f0' stroke='#1a1a1a' stroke-width='1.2'/><path d='M107.5 12.5 L110.5 15.5' stroke='#1a1a1a' stroke-width='1.6'/><path d='M109 5 H113 M111 3 V7' stroke='#1a1a1a' stroke-width='0.8'/>
<rect x='118.5' y='4.5' width='7' height='7' fill='#f4f4f4' stroke='#3a3a3a'/><circle cx='125' cy='11' r='3' fill='#f4f4f4' stroke='#1a1a1a'/><path d='M127 13 L130 16' stroke='#1a1a1a' stroke-width='1.4'/>
<path d='M137 4 H139 M137 4 V6 M149 4 H147 M149 4 V6 M137 16 H139 M137 16 V14 M149 16 H147 M149 16 V14' stroke='#1a1a1a'/>
<rect x='139.5' y='7.5' width='7' height='7' fill='#50a040' stroke='#205020'/>
<rect x='155.5' y='9.5' width='6' height='6' fill='#50a040' stroke='#205020'/><rect x='159.5' y='4.5' width='6' height='6' fill='#f4f4f4' stroke='#3a3a3a'/><rect x='155.5' y='4.5' width='4' height='4' fill='#c0c0c0' stroke='#3a3a3a'/>
</svg><div class=a style='left:886px;top:64px;width:138px;height:445px;background:#c4c4c4'></div><div class=a style='left:889px;top:65.5px;width:19.5px;height:18.5px;background:#c4c4c4;border-top:1px solid #d8d8d8;border-left:1px solid #d8d8d8;border-right:1px solid #a0a0a0'></div><div class=a style='left:911.5px;top:65.5px;width:18.5px;height:18.5px;background:#cdcdcd;border-top:1px solid #d8d8d8;border-left:1px solid #d8d8d8;border-right:1px solid #a0a0a0'></div><div class=a style='left:932px;top:65.5px;width:20.5px;height:18.5px;background:#c4c4c4;border-top:1px solid #d8d8d8;border-left:1px solid #d8d8d8;border-right:1px solid #a0a0a0'></div><div class=a style='left:953.5px;top:65.5px;width:20.5px;height:18.5px;background:#c4c4c4;border-top:1px solid #d8d8d8;border-left:1px solid #d8d8d8;border-right:1px solid #a0a0a0'></div><div class=a style='left:975.5px;top:65.5px;width:20.0px;height:18.5px;background:#c4c4c4;border-top:1px solid #d8d8d8;border-left:1px solid #d8d8d8;border-right:1px solid #a0a0a0'></div><div class=a style='left:997px;top:65.5px;width:20.5px;height:18.5px;background:#c4c4c4;border-top:1px solid #d8d8d8;border-left:1px solid #d8d8d8;border-right:1px solid #a0a0a0'></div><div class=a style='left:887px;top:84px;width:137px;height:1px;background:#d6d6d6'></div><svg style='left:886px;top:64px' width='138' height='24'>
<g stroke='#f0a020' stroke-width='1.2'><path d='M12.3 7 V19 M6.3 13 H18.3 M8 8.7 L16.6 17.3 M16.6 8.7 L8 17.3'/></g>
<circle cx='12.3' cy='13' r='3' fill='#fff4a0'/>
<path d='M30 18.5 C30 11 34 8 42 8' stroke='#2a5a90' stroke-width='5' fill='none'/>
<path d='M30 18.5 C30 11 34 8 42 8' stroke='#5aa0e0' stroke-width='3' fill='none'/>
<path d='M28.5 7.5 H42.5 V19.5 H28.5 Z' stroke='#3a3a3a' stroke-width='0.7' fill='none'/>
<circle cx='28.5' cy='7.5' r='1.2' fill='#3a3a3a'/><circle cx='42.5' cy='19.5' r='1.2' fill='#3a3a3a'/>
<rect x='55.5' y='6.5' width='6' height='5' fill='#f4f4f4' stroke='#3a3a3a'/>
<path d='M58.5 11.5 V14 M52.5 17 V14 H64.5 V17 M58.5 14 V17' stroke='#3a3a3a' fill='none'/>
<circle cx='52.5' cy='18.5' r='1.7' fill='#f4f4f4' stroke='#3a3a3a'/><circle cx='58.5' cy='18.5' r='1.7' fill='#f4f4f4' stroke='#3a3a3a'/><circle cx='64.5' cy='18.5' r='1.7' fill='#f4f4f4' stroke='#3a3a3a'/>
<circle cx='79.5' cy='13' r='6' fill='#e8e8e8' stroke='#2a2a2a' stroke-width='1.4'/>
<circle cx='79.5' cy='13' r='3.5' fill='none' stroke='#2a2a2a' stroke-width='1'/>
<circle cx='79.5' cy='13' r='1.5' fill='#8a8a8a'/>
<rect x='94.5' y='7.5' width='14' height='10' fill='#f8f8f8' stroke='#2a2a2a' stroke-width='1.2'/>
<rect x='99' y='10' width='5' height='5' fill='none' stroke='#5a5a5a'/>
<path d='M97 20 H106 M101.5 17.5 V20' stroke='#2a2a2a'/>
<path d='M118 19.5 L126 11.5' stroke='#a06030' stroke-width='2'/>
<path d='M123 8.5 L126.5 6 L131.5 11 L129 13.5 L127.5 12 L125 10.5 Z' fill='#4a4a4a'/>
</svg><div class=a style='left:892.5px;top:88.5px;width:109.5px;height:14.5px;background:#e0e0e0;border-top:1px solid #1a1a1a;border-left:1px solid #1a1a1a;border-right:1px solid #d8d8d8;border-bottom:1px solid #d8d8d8;box-shadow:inset 1px 1px 0 #707070'></div><div class=a style='left:1004.5px;top:89px;width:13.0px;height:14px;background:#e8eccc;border:1px solid #b8b8a8'></div><div class=a style='left:893px;top:107.5px;width:125px;height:17.5px;background:#e0e0e0;border-top:1px solid #1a1a1a;border-left:1px solid #1a1a1a;border-right:1px solid #d8d8d8;border-bottom:1px solid #d8d8d8;box-shadow:inset 1px 1px 0 #707070'></div><div class=a style='left:1004px;top:109.5px;width:13px;height:14.5px;background:#fafafa'></div><svg style='left:1004px;top:109px' width='13' height='15'><path d='M3.5 7 H9.5 L6.5 10 Z' fill='#000'/></svg><div class=a style='left:899.5px;top:130px;width:54.5px;height:15.5px;background:#c8c8c8;border-top:1px solid #e8e8e8;border-left:1px solid #e8e8e8;border-right:1px solid #8a8a8a;border-bottom:1px solid #8a8a8a'></div><div class=a style='left:893px;top:151px;width:124px;height:85.5px;background:#e2e2e2;border:1px solid #9a9a9a;border-top-color:#7a7a7a;border-radius:2px'></div><div class=a style='left:895px;top:152.8px;width:120px;height:11.199999999999989px;background:#7c7c7c'></div><div class=a style='left:895px;top:175px;width:120px;height:1px;background:#a0a0a0'></div><svg style='left:895px;top:152px' width='30' height='26'>
<circle cx='9' cy='5' r='3.2' fill='#f4f4f4' stroke='#2a2a2a'/><rect x='7.5' y='8' width='3' height='3' fill='#f4f4f4' stroke='#2a2a2a' stroke-width='0.8'/>
<rect x='4' y='14.5' width='6.5' height='6.5' fill='#050505'/><path d='M5.5 17.75 H9 M7.25 16 V19.5' stroke='#f0f0f0' stroke-width='1'/>
</svg><div class=a style='left:921.5px;top:238.5px;width:19.0px;height:18.5px;background:#cacaca;border:1px solid #a8a8a8;border-right-color:#e0e0e0;border-bottom-color:#e0e0e0'></div><div class=a style='left:917.5px;top:242px;width:1.0px;height:12px;background:#a0a0a0'></div><div class=a style='left:918.5px;top:242px;width:1.0px;height:12px;background:#dedede'></div><div class=a style='left:944.5px;top:242px;width:1.0px;height:12px;background:#a0a0a0'></div><div class=a style='left:945.5px;top:242px;width:1.0px;height:12px;background:#dedede'></div><div class=a style='left:989.5px;top:242px;width:1.0px;height:12px;background:#a0a0a0'></div><div class=a style='left:990.5px;top:242px;width:1.0px;height:12px;background:#dedede'></div><svg style='left:890px;top:236px' width='130' height='24'>
<path d='M8 11.5 H13 M13 8 L19 9 V14 L13 15 Z' stroke='#1a1a1a' fill='#1a1a1a' stroke-width='1.1'/>
<path d='M40 6 C38 6 38 8 39.5 9 V16 C38 17 38 19 40 19 H42 C43.5 19 43.5 17 42.5 16 V9 C43.5 8 43.5 6 42 6 Z' fill='#fafafa' stroke='#2a2a2a'/>
<path d='M62 7 L66.5 16 L71 7' stroke='#1a1a1a' fill='none' stroke-width='1.1'/><circle cx='66.5' cy='16' r='1.8' fill='#fafafa' stroke='#1a1a1a'/>
<rect x='82' y='11' width='7' height='7' rx='2.5' fill='#f4f4f4' stroke='#1a1a1a' stroke-width='1.1'/><path d='M83.5 11 V9 A2 2 0 0 1 87.5 9 V11' stroke='#1a1a1a' fill='none'/>
<rect x='107.5' y='7.5' width='11' height='12' fill='#f8f8f8' stroke='#1a2aa0' stroke-width='1.3'/>
<rect x='107.5' y='7' width='11' height='2.5' fill='#1a2aa0'/>
<rect x='110' y='12' width='3' height='3' fill='none' stroke='#3a3a3a' stroke-width='0.8'/><rect x='114' y='15' width='3' height='3' fill='none' stroke='#3a3a3a' stroke-width='0.8'/>
</svg><div class=a style='left:890px;top:265px;width:131px;height:2px;background:#3c3c3c'></div><div class=a style='left:889.5px;top:272.5px;width:130.0px;height:231.5px;border-top:1px solid #a8a8a8;border-left:1px solid #a8a8a8;border-right:1px solid #9a9a9a;border-bottom:1px solid #dcdcdc'></div><div class=a style='left:891.5px;top:274px;width:122.5px;height:228px;border:1px solid #a0a0a0;border-right-color:#e0e0e0;border-bottom-color:#e0e0e0'></div><div class=a style='left:1014px;top:280px;width:1px;height:223px;background:#7a7a7a'></div><div class=a style='left:1016.5px;top:273px;width:3.0px;height:230px;background:#8e8e8e'></div><div class=a style='left:1019.5px;top:273px;width:1.5px;height:230px;background:#d4d4d4'></div><div class=a style='left:1016px;top:494px;width:4px;height:9px;background:#0a0a0a'></div><div class=a style='left:894px;top:276px;width:119px;height:12px;background:#c0c0c0;border:1px solid #2a2a2a;border-top-color:#4a4a4a'></div><div class=a style='left:948.5px;top:296px;width:42.0px;height:10.5px;background:#e0e0e0;border-top:1px solid #1a1a1a;border-left:1px solid #1a1a1a;border-right:1px solid #d8d8d8;border-bottom:1px solid #d8d8d8;box-shadow:inset 1px 1px 0 #707070'></div><div class=a style='left:992.5px;top:296px;width:8.0px;height:10.5px;background:#c6c6c6;border-top:1px solid #e4e4e4;border-left:1px solid #e4e4e4;border-right:1px solid #8a8a8a;border-bottom:1px solid #8a8a8a'></div><svg style='left:992.5px;top:296px' width='8' height='10.5'><path d='M1.5 4.05 L4 1.0499999999999998 L6.5 4.05 Z M1.5 6.45 L4 9.45 L6.5 6.45 Z' fill='#101010'/></svg><div class=a style='left:948.5px;top:310px;width:42.0px;height:11px;background:#e0e0e0;border-top:1px solid #1a1a1a;border-left:1px solid #1a1a1a;border-right:1px solid #d8d8d8;border-bottom:1px solid #d8d8d8;box-shadow:inset 1px 1px 0 #707070'></div><div class=a style='left:992.5px;top:310px;width:8.0px;height:11px;background:#c6c6c6;border-top:1px solid #e4e4e4;border-left:1px solid #e4e4e4;border-right:1px solid #8a8a8a;border-bottom:1px solid #8a8a8a'></div><svg style='left:992.5px;top:310px' width='8' height='11'><path d='M1.5 4.3 L4 1.2999999999999998 L6.5 4.3 Z M1.5 6.7 L4 9.7 L6.5 6.7 Z' fill='#101010'/></svg><svg style='left:895.5px;top:328.5px' width='116.5' height='51.0'><path d='M4.2999999999999545 0.5 H0.5 V49.5 H115.0 V0.5 H36.799999999999955' stroke='#8a8a8a' fill='none'/><path d='M4.2999999999999545 1.5 H1.5 V48.5 M1 50.5 H116.0 V0.5 M114.0 1.5 H36.799999999999955' stroke='#e2e2e2' fill='none' opacity='0.7'/></svg><div class=a style='left:930px;top:336px;width:10px;height:10px;background:#e4e4e4;border-top:1px solid #5a5a5a;border-left:1px solid #5a5a5a;border-right:1px solid #f4f4f4;border-bottom:1px solid #f4f4f4;box-shadow:inset 1px 1px 0 #a0a0a0'></div><svg style='left:930px;top:336px' width='10' height='10'><path d='M2 4.5 L4 7 L8 2' stroke='#000' stroke-width='1.8' fill='none'/></svg><div class=a style='left:930px;top:349px;width:10px;height:10px;background:#e4e4e4;border-top:1px solid #5a5a5a;border-left:1px solid #5a5a5a;border-right:1px solid #f4f4f4;border-bottom:1px solid #f4f4f4;box-shadow:inset 1px 1px 0 #a0a0a0'></div><svg style='left:930px;top:349px' width='10' height='10'><path d='M2 4.5 L4 7 L8 2' stroke='#000' stroke-width='1.8' fill='none'/></svg><svg style='left:915px;top:365px' width='8.5' height='8.5'><circle cx='4.25' cy='4.25' r='3.65' fill='#e6e6e6'/><path d='M1.0499999999999998 6.45 A3.45 3.45 0 0 1 6.45 1.0499999999999998' stroke='#707070' stroke-width='1.3' fill='none'/><circle cx='4.25' cy='4.25' r='1.9' fill='#000'/></svg><svg style='left:965px;top:365px' width='8.5' height='8.5'><circle cx='4.25' cy='4.25' r='3.65' fill='#e6e6e6'/><path d='M1.0499999999999998 6.45 A3.45 3.45 0 0 1 6.45 1.0499999999999998' stroke='#707070' stroke-width='1.3' fill='none'/></svg><svg style='left:895.5px;top:386.5px' width='116.5' height='49.5'><path d='M3.8999999999999773 0.5 H0.5 V48.0 H115.0 V0.5 H32.89999999999998' stroke='#8a8a8a' fill='none'/><path d='M3.8999999999999773 1.5 H1.5 V47.0 M1 49.0 H116.0 V0.5 M114.0 1.5 H32.89999999999998' stroke='#e2e2e2' fill='none' opacity='0.7'/></svg><svg style='left:929px;top:393px' width='8.5' height='8.5'><circle cx='4.25' cy='4.25' r='3.65' fill='#e6e6e6'/><path d='M1.0499999999999998 6.45 A3.45 3.45 0 0 1 6.45 1.0499999999999998' stroke='#707070' stroke-width='1.3' fill='none'/></svg><svg style='left:929px;top:407px' width='8.5' height='8.5'><circle cx='4.25' cy='4.25' r='3.65' fill='#e6e6e6'/><path d='M1.0499999999999998 6.45 A3.45 3.45 0 0 1 6.45 1.0499999999999998' stroke='#707070' stroke-width='1.3' fill='none'/><circle cx='4.25' cy='4.25' r='1.9' fill='#000'/></svg><svg style='left:929px;top:420px' width='8.5' height='8.5'><circle cx='4.25' cy='4.25' r='3.65' fill='#e6e6e6'/><path d='M1.0499999999999998 6.45 A3.45 3.45 0 0 1 6.45 1.0499999999999998' stroke='#707070' stroke-width='1.3' fill='none'/></svg><div class=a style='left:899px;top:439px;width:10px;height:10px;background:#e4e4e4;border-top:1px solid #5a5a5a;border-left:1px solid #5a5a5a;border-right:1px solid #f4f4f4;border-bottom:1px solid #f4f4f4;box-shadow:inset 1px 1px 0 #a0a0a0'></div><div class=a style='left:899px;top:451px;width:10px;height:10px;background:#c8c8c8;border-top:1px solid #5a5a5a;border-left:1px solid #5a5a5a;border-right:1px solid #f4f4f4;border-bottom:1px solid #f4f4f4;box-shadow:inset 1px 1px 0 #a0a0a0'></div><div class=a style='left:899px;top:463px;width:10px;height:10px;background:#e4e4e4;border-top:1px solid #5a5a5a;border-left:1px solid #5a5a5a;border-right:1px solid #f4f4f4;border-bottom:1px solid #f4f4f4;box-shadow:inset 1px 1px 0 #a0a0a0'></div><svg style='left:899px;top:463px' width='10' height='10'><path d='M2 4.5 L4 7 L8 2' stroke='#000' stroke-width='1.8' fill='none'/></svg><div class=a style='left:911px;top:475px;width:10px;height:10px;background:#e4e4e4;border-top:1px solid #5a5a5a;border-left:1px solid #5a5a5a;border-right:1px solid #f4f4f4;border-bottom:1px solid #f4f4f4;box-shadow:inset 1px 1px 0 #a0a0a0'></div><div class=a style='left:899px;top:487px;width:10px;height:10px;background:#e4e4e4;border-top:1px solid #5a5a5a;border-left:1px solid #5a5a5a;border-right:1px solid #f4f4f4;border-bottom:1px solid #f4f4f4;box-shadow:inset 1px 1px 0 #a0a0a0'></div><svg style='left:899px;top:487px' width='10' height='10'><path d='M2 4.5 L4 7 L8 2' stroke='#000' stroke-width='1.8' fill='none'/></svg><div class=a style='left:620px;top:133.5px;width:199px;height:176.0px;background:#a9c4de;border:1px solid #5a6a7a;border-radius:5px 5px 0 0'></div><div class=a style='left:621px;top:134.5px;width:197px;height:17.5px;background:linear-gradient(#bcd2ea,#adc6e0 50%,#a4bedb);border-radius:4px 4px 0 0'></div><div class=a style='left:621px;top:152px;width:197px;height:156.5px;background:#bdd3e8'></div><div class=a style='left:623.5px;top:152px;width:192.0px;height:154px;background:#c2c2c2;border:1px solid #8aa0b8'></div><div class=a style='left:620px;top:307.5px;width:199px;height:2.0px;background:#2aa0c8'></div><div class=a style='left:767px;top:137px;width:23px;height:13px;background:linear-gradient(#dae6f2 0,#c6d6e8 48%,#a6bed6 52%,#b4cae0 100%);border:1px solid #7a8a9a;border-radius:2px'></div><div class=a style='left:791.5px;top:137px;width:23.0px;height:13px;background:linear-gradient(#f0aa9a 0,#e08a78 45%,#c84a30 52%,#dc7058 100%);border:1px solid #6a3a3a;border-radius:2px'></div><svg style='left:760px;top:134px' width='60' height='20'>
<text x='14.8' y='13.8' font-family='Liberation Sans' font-size='10' fill='#4a5060' stroke='#f0f0f0' stroke-width='0.5' paint-order='stroke'>?</text>
<path d='M40 7 L46 12.5 M46 7 L40 12.5' stroke='#5a4040' stroke-width='3.2'/><path d='M40 7 L46 12.5 M46 7 L40 12.5' stroke='#ffffff' stroke-width='1.9'/>
</svg><svg style='left:629.5px;top:166px' width='89.0' height='60'><path d='M5.0 0.5 H0.5 V58.5 H87.5 V0.5 H32.60000000000002' stroke='#8a8a8a' fill='none'/><path d='M5.0 1.5 H1.5 V57.5 M1 59.5 H88.5 V0.5 M86.5 1.5 H32.60000000000002' stroke='#e6e6e6' fill='none' opacity='0.7'/></svg><svg style='left:722px;top:166px' width='88.5' height='60'><path d='M3.7999999999999545 0.5 H0.5 V58.5 H87.0 V0.5 H43' stroke='#8a8a8a' fill='none'/><path d='M3.7999999999999545 1.5 H1.5 V57.5 M1 59.5 H88.0 V0.5 M86.0 1.5 H43' stroke='#e6e6e6' fill='none' opacity='0.7'/></svg><svg style='left:637px;top:179.5px' width='8.5' height='8.5'><circle cx='4.25' cy='4.25' r='3.65' fill='#e6e6e6'/><path d='M1.0499999999999998 6.45 A3.45 3.45 0 0 1 6.45 1.0499999999999998' stroke='#707070' stroke-width='1.3' fill='none'/><circle cx='4.25' cy='4.25' r='1.9' fill='#000'/></svg><svg style='left:637px;top:193.5px' width='8.5' height='8.5'><circle cx='4.25' cy='4.25' r='3.65' fill='#e6e6e6'/><path d='M1.0499999999999998 6.45 A3.45 3.45 0 0 1 6.45 1.0499999999999998' stroke='#707070' stroke-width='1.3' fill='none'/></svg><svg style='left:637px;top:207.5px' width='8.5' height='8.5'><circle cx='4.25' cy='4.25' r='3.65' fill='#e6e6e6'/><path d='M1.0499999999999998 6.45 A3.45 3.45 0 0 1 6.45 1.0499999999999998' stroke='#707070' stroke-width='1.3' fill='none'/></svg><svg style='left:727px;top:179.5px' width='8.5' height='8.5'><circle cx='4.25' cy='4.25' r='3.65' fill='#c6c6c6'/><path d='M1.0499999999999998 6.45 A3.45 3.45 0 0 1 6.45 1.0499999999999998' stroke='#9a9a9a' stroke-width='1.3' fill='none'/><circle cx='4.25' cy='4.25' r='1.9' fill='#7a7a7a'/></svg><svg style='left:727px;top:193.5px' width='8.5' height='8.5'><circle cx='4.25' cy='4.25' r='3.65' fill='#c6c6c6'/><path d='M1.0499999999999998 6.45 A3.45 3.45 0 0 1 6.45 1.0499999999999998' stroke='#9a9a9a' stroke-width='1.3' fill='none'/></svg><div class=a style='left:722px;top:232px;width:30px;height:12px;background:#e2e2e2;border-top:1px solid #1a1a1a;border-left:1px solid #1a1a1a;border-right:1px solid #d8d8d8;border-bottom:1px solid #d8d8d8;box-shadow:inset 1px 1px 0 #707070'></div><div class=a style='left:752.5px;top:232.5px;width:8.0px;height:11.5px;background:#c6c6c6;border-top:1px solid #e4e4e4;border-left:1px solid #e4e4e4;border-right:1px solid #8a8a8a;border-bottom:1px solid #8a8a8a'></div><svg style='left:752.5px;top:232.5px' width='8' height='11.5'><path d='M1.5 4.55 L4 1.5499999999999998 L6.5 4.55 Z M1.5 6.95 L4 9.95 L6.5 6.95 Z' fill='#101010'/></svg><div class=a style='left:629.5px;top:261.5px;width:180.0px;height:15.0px;background:#e0e0e0;border:1px solid #a8a8a8;border-right-color:#f4f4f4;border-bottom-color:#f4f4f4'></div><div class=a style='left:694.5px;top:284px;width:56.5px;height:17px;background:#c4c4c4;border:1px solid #5a5a5a;box-shadow:inset 1px 1px 0 #e8e8e8, inset -1px -1px 0 #8a8a8a'></div><div class=a style='left:697px;top:286px;width:51.5px;height:13px;border:1px dotted #707070'></div><div class=a style='left:753px;top:284px;width:56.5px;height:17px;background:#c8c8c8;border:1px solid #9a9a9a;box-shadow:inset 1px 1px 0 #eeeeee, inset -1px -1px 0 #a8a8a8'></div><div class=t style='left:339.8px;top:5.0px;font-size:9.5px;color:#1c1c1c;transform:scaleX(0.881);'>Autodesk 3ds Max&nbsp; 2012 x64</div>
<div class=t style='left:462.9px;top:5.0px;font-size:9.5px;color:#1c1c1c;transform:scaleX(0.910);'>casa per 3d studio.max</div>
<div class=t style='left:733.4px;top:5.0px;font-size:9.4px;color:#8a8a8a;transform:scaleX(0.841);font-style:italic'>Type a keyword or phrase</div>
<div class=t style='left:41.2px;top:22.0px;font-size:9.5px;color:#18182a;transform:scaleX(0.934);'>Edit</div>
<div class=t style='left:74.5px;top:22.0px;font-size:9.5px;color:#18182a;transform:scaleX(0.965);'>Tools</div>
<div class=t style='left:114.1px;top:22.0px;font-size:9.5px;color:#18182a;transform:scaleX(0.920);'>Group</div>
<div class=t style='left:156.6px;top:22.0px;font-size:9.5px;color:#18182a;transform:scaleX(0.906);'>Views</div>
<div class=t style='left:197.0px;top:22.0px;font-size:9.5px;color:#18182a;transform:scaleX(0.894);'>Create</div>
<div class=t style='left:236.9px;top:22.0px;font-size:9.5px;color:#18182a;transform:scaleX(0.962);'>Modifiers</div>
<div class=t style='left:284.9px;top:22.0px;font-size:9.5px;color:#18182a;transform:scaleX(0.985);'>Animation</div>
<div class=t style='left:337.6px;top:22.0px;font-size:9.5px;color:#18182a;transform:scaleX(0.899);'>Graph Editors</div>
<div class=t style='left:405.0px;top:22.0px;font-size:9.5px;color:#18182a;transform:scaleX(0.921);'>Rendering</div>
<div class=t style='left:463.6px;top:22.0px;font-size:9.5px;color:#18182a;transform:scaleX(0.927);'>Customize</div>
<div class=t style='left:523.6px;top:22.0px;font-size:9.5px;color:#18182a;transform:scaleX(0.923);'>MAXScript</div>
<div class=t style='left:583.1px;top:22.0px;font-size:9.5px;color:#18182a;transform:scaleX(0.962);'>Help</div>
<div class=t style='left:85.3px;top:41.0px;font-size:9.5px;color:#101030;transform:scaleX(0.805);'>All</div>
<div class=t style='left:309.6px;top:41.0px;font-size:9.5px;color:#101030;transform:scaleX(0.813);'>View</div>
<div class=t style='left:566.5px;top:41.0px;font-size:9.5px;color:#8c8c8c;transform:scaleX(0.864);'>Create Selection Se</div>
<div class=t style='left:929.2px;top:44.0px;font-size:9.5px;color:#151515;transform:scaleX(0.781);'>VMPP25</div>
<div class=t style='left:4.7px;top:70.0px;font-size:10px;color:#cacaca;transform:scaleX(0.803);-webkit-text-stroke:0'>[ + ] [ Perspective ] [ Smooth + Highlights ]</div>
<div class=t style='left:626.3px;top:139.0px;font-size:9.5px;color:#1a2030;transform:scaleX(0.937);'>Clone Options</div>
<div class=t style='left:636.5px;top:162.0px;font-size:9.5px;color:#1a1a2a;transform:scaleX(0.859);'>Object</div>
<div class=t style='left:727.8px;top:162.0px;font-size:9.5px;color:#8a8a8a;transform:scaleX(0.855);'>Controller</div>
<div class=t style='left:649.9px;top:178.0px;font-size:9.5px;color:#1a1a2a;transform:scaleX(0.829);'>Copy</div>
<div class=t style='left:739.5px;top:178.0px;font-size:9.5px;color:#8a8a8a;transform:scaleX(0.829);'>Copy</div>
<div class=t style='left:649.9px;top:192.0px;font-size:9.5px;color:#1a1a2a;transform:scaleX(0.855);'>Instance</div>
<div class=t style='left:739.5px;top:192.0px;font-size:9.5px;color:#8a8a8a;transform:scaleX(0.855);'>Instance</div>
<div class=t style='left:649.9px;top:207.0px;font-size:9.5px;color:#1a1a2a;transform:scaleX(0.842);'>Reference</div>
<div class=t style='left:629.4px;top:232.0px;font-size:9.5px;color:#1a1a2a;transform:scaleX(0.833);'>Number of Copies:</div>
<div class=t style='left:725.0px;top:234.0px;font-size:9.5px;color:#1a1a2a;'>1</div>
<div class=t style='left:629.4px;top:250.0px;font-size:9.5px;color:#1a1a2a;transform:scaleX(0.804);'>Name:</div>
<div class=t style='left:633.9px;top:263.0px;font-size:9.5px;color:#1a1a2a;transform:scaleX(0.825);'>Line010</div>
<div class=t style='left:715.5px;top:287.0px;font-size:9.5px;color:#1a1a2a;transform:scaleX(0.823);'>OK</div>
<div class=t style='left:767.8px;top:287.0px;font-size:9.5px;color:#1a1a2a;transform:scaleX(0.832);'>Cancel</div>
<div class=t style='left:894.8px;top:91.0px;font-size:9.5px;color:#22225a;transform:scaleX(0.810);'>Line010</div>
<div class=t style='left:895.5px;top:111.0px;font-size:9.5px;color:#22225a;transform:scaleX(0.838);'>Modifier List</div>
<div class=t style='left:908.8px;top:133.0px;font-size:9.5px;color:#2a2a3a;transform:scaleX(0.804);'>UVW Map</div>
<div class=t style='left:925.7px;top:153.0px;font-size:9.5px;color:#101010;transform:scaleX(0.933);font-weight:bold'>Extrude</div>
<div class=t style='left:910.7px;top:165.0px;font-size:9.5px;color:#0a0a28;transform:scaleX(0.891);font-weight:bold'>Line</div>
<div class=t style='left:898.0px;top:277.0px;font-size:9.5px;color:#2a2a3a;'>-</div>
<div class=t style='left:932.7px;top:277.0px;font-size:9.5px;color:#2a2a3a;transform:scaleX(0.839);'>Parameters</div>
<div class=t style='left:915.2px;top:296.0px;font-size:9.5px;color:#1a1a2a;transform:scaleX(0.853);'>Amount:</div>
<div class=t style='left:951.0px;top:296.0px;font-size:9.5px;color:#1a1a3a;transform:scaleX(0.847);'>0,2m</div>
<div class=t style='left:907.4px;top:311.0px;font-size:9.5px;color:#1a1a2a;transform:scaleX(0.837);'>Segments:</div>
<div class=t style='left:951.0px;top:311.0px;font-size:9.5px;color:#1a1a3a;'>1</div>
<div class=t style='left:901.8px;top:323.0px;font-size:9.5px;color:#1a1a3a;transform:scaleX(0.805);'>Capping</div>
<div class=t style='left:943.6px;top:336.0px;font-size:9.5px;color:#1a1a3a;transform:scaleX(0.850);'>Cap Start</div>
<div class=t style='left:943.6px;top:349.0px;font-size:9.5px;color:#1a1a3a;transform:scaleX(0.798);'>Cap End</div>
<div class=t style='left:927.8px;top:365.0px;font-size:9.5px;color:#1a1a3a;transform:scaleX(0.809);'>Morph</div>
<div class=t style='left:977.0px;top:365.0px;font-size:9.5px;color:#1a1a3a;transform:scaleX(0.785);'>Grid</div>
<div class=t style='left:901.4px;top:382.0px;font-size:9.5px;color:#1a1a3a;transform:scaleX(0.876);'>Output</div>
<div class=t style='left:941.2px;top:394.0px;font-size:9.5px;color:#1a1a3a;transform:scaleX(0.827);'>Patch</div>
<div class=t style='left:941.2px;top:407.0px;font-size:9.5px;color:#1a1a3a;transform:scaleX(0.805);'>Mesh</div>
<div class=t style='left:941.2px;top:422.0px;font-size:9.5px;color:#1a1a3a;transform:scaleX(0.740);'>NURBS</div>
<div class=t style='left:912.1px;top:439.0px;font-size:9.5px;color:#1a1a3a;transform:scaleX(0.839);'>Generate Mapping Coords.</div>
<div class=t style='left:912.1px;top:451.0px;font-size:9.5px;color:#a0a0a0;transform:scaleX(0.816);'>Real-World Map Size</div>
<div class=t style='left:912.1px;top:463.0px;font-size:9.5px;color:#1a1a3a;transform:scaleX(0.843);'>Generate Material IDs</div>
<div class=t style='left:923.9px;top:476.0px;font-size:9.5px;color:#1a1a3a;transform:scaleX(0.820);'>Use Shape IDs</div>
<div class=t style='left:912.1px;top:488.0px;font-size:9.5px;color:#1a1a3a;transform:scaleX(0.815);'>Smooth</div>
<div class=t style='left:45.3px;top:477.0px;font-size:9.5px;color:#1a1a2a;transform:scaleX(0.888);'>0 / 100</div>
<div class=t style='left:85.2px;top:515.0px;font-size:9.5px;color:#1a1a2a;transform:scaleX(0.833);'>1 Object Selected</div>
<div class=t style='left:84.8px;top:534.0px;font-size:9.5px;color:#1a1a2a;transform:scaleX(0.845);'>Click and drag to select and move objects</div>
<div class=t style='left:4.7px;top:530.0px;font-size:9.4px;color:#202020;transform:scaleX(0.897);font-family:Liberation Mono,monospace;-webkit-text-stroke:0'>Max to Physc:</div>
<div class=t style='left:431.5px;top:515.0px;font-size:9.5px;color:#1a1a2a;'>X:</div>
<div class=t style='left:444.0px;top:515.0px;font-size:9.5px;color:#1a1a2a;transform:scaleX(0.839);'>4,221m</div>
<div class=t style='left:494.0px;top:515.0px;font-size:9.5px;color:#1a1a2a;'>Y:</div>
<div class=t style='left:505.0px;top:515.0px;font-size:9.5px;color:#1a1a2a;transform:scaleX(0.858);'>4,182m</div>
<div class=t style='left:555.0px;top:515.0px;font-size:9.5px;color:#1a1a2a;'>Z:</div>
<div class=t style='left:566.0px;top:515.0px;font-size:9.5px;color:#1a1a2a;transform:scaleX(0.934);'>3,801m</div>
<div class=t style='left:621.3px;top:515.0px;font-size:9.5px;color:#1a1a2a;transform:scaleX(0.848);'>Grid = 10,0m</div>
<div class=t style='left:621.3px;top:534.0px;font-size:9.5px;color:#1a1a2a;transform:scaleX(0.841);'>Add Time Tag</div>
<div class=t style='left:730.8px;top:515.0px;font-size:9.5px;color:#1a1a2a;transform:scaleX(0.845);'>Auto Key</div>
<div class=t style='left:734.0px;top:531.0px;font-size:9.5px;color:#1a1a2a;transform:scaleX(0.814);'>Set Key</div>
<div class=t style='left:770.9px;top:515.0px;font-size:9.5px;color:#1a1a2a;transform:scaleX(0.811);'>Selected</div>
<div class=t style='left:797.0px;top:531.0px;font-size:9.5px;color:#1a1a2a;transform:scaleX(0.877);'>Key Filters...</div>
<div class=t style='left:3.0px;top:478.0px;font-size:10px;color:#2a2a2a;'>&lt;</div>
<div class=t style='left:108.0px;top:478.0px;font-size:10px;color:#2a2a2a;'>&gt;</div>
<div class=t style='left:38.7px;top:499.0px;font-size:9.5px;color:#1a1a2a;'>0</div>
<div class=t style='left:78.9px;top:499.0px;font-size:9.5px;color:#1a1a2a;'>5</div>
<div class=t style='left:116.4px;top:499.0px;font-size:9.5px;color:#1a1a2a;'>10</div>
<div class=t style='left:156.7px;top:499.0px;font-size:9.5px;color:#1a1a2a;'>15</div>
<div class=t style='left:196.9px;top:499.0px;font-size:9.5px;color:#1a1a2a;'>20</div>
<div class=t style='left:237.1px;top:499.0px;font-size:9.5px;color:#1a1a2a;'>25</div>
<div class=t style='left:277.3px;top:499.0px;font-size:9.5px;color:#1a1a2a;'>30</div>
<div class=t style='left:317.5px;top:499.0px;font-size:9.5px;color:#1a1a2a;'>35</div>
<div class=t style='left:357.7px;top:499.0px;font-size:9.5px;color:#1a1a2a;'>40</div>
<div class=t style='left:397.9px;top:499.0px;font-size:9.5px;color:#1a1a2a;'>45</div>
<div class=t style='left:438.2px;top:499.0px;font-size:9.5px;color:#1a1a2a;'>50</div>
<div class=t style='left:478.4px;top:499.0px;font-size:9.5px;color:#1a1a2a;'>55</div>
<div class=t style='left:518.6px;top:499.0px;font-size:9.5px;color:#1a1a2a;'>60</div>
<div class=t style='left:558.8px;top:499.0px;font-size:9.5px;color:#1a1a2a;'>65</div>
<div class=t style='left:599.0px;top:499.0px;font-size:9.5px;color:#1a1a2a;'>70</div>
<div class=t style='left:639.2px;top:499.0px;font-size:9.5px;color:#1a1a2a;'>75</div>
<div class=t style='left:679.5px;top:499.0px;font-size:9.5px;color:#1a1a2a;'>80</div>
<div class=t style='left:719.7px;top:499.0px;font-size:9.5px;color:#1a1a2a;'>85</div>
<div class=t style='left:759.9px;top:499.0px;font-size:9.5px;color:#1a1a2a;'>90</div>
<div class=t style='left:800.1px;top:499.0px;font-size:9.5px;color:#1a1a2a;'>95</div>
<div class=t style='left:837.7px;top:499.0px;font-size:9.5px;color:#1a1a2a;'>100</div><div class=a style='left:878px;top:528px;width:48px;height:17px;background:linear-gradient(#f4f4f4,#e4e4e4);border-top:2px solid #202020;border-left:1px solid #303030'></div><div class=t style='left:857.6px;top:525px;font-size:16.5px;color:rgba(215,215,222,0.6);-webkit-text-stroke:0;text-shadow:1px 1px 0 rgba(50,50,70,0.6),-1px -1px 0 rgba(255,255,255,0.7)'>www.grafica2d3d.com</div>

</body></html>
